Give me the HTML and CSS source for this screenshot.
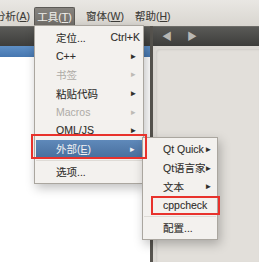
FILE: index.html
```html
<!DOCTYPE html>
<html lang="zh-CN">
<head>
  <meta charset="UTF-8" />
  <title>工具菜单</title>
  <link rel="stylesheet" href="styles.css">
</head>
<body>
  <div class="menubar">
    <span class="menubar-item clipped">分析(<u>A</u>)</span>
    <span class="menubar-item active">工具(<u>T</u>)</span>
    <span class="menubar-item">窗体(<u>W</u>)</span>
    <span class="menubar-item">帮助(<u>H</u>)</span>
  </div>

  <div class="workspace">
    <div class="left-pane">
      <div class="dark-bar"></div>
      <div class="selected-row"></div>
      <div class="white-area"></div>
    </div>
    <div class="divider"></div>
    <div class="right-pane">
      <div class="dark-bar nav-bar">
        <span class="nav-arrow">&#9664;</span>
        <span class="nav-arrow">&#9654;</span>
      </div>
      <div class="editor-area">
        <div class="editor-panel"></div>
      </div>
    </div>
  </div>

  <!-- 工具 dropdown -->
  <div class="menu tools-menu">
    <div class="menu-item"><span>定位...</span><span class="shortcut">Ctrl+K</span></div>
    <div class="menu-item"><span>C++</span><span class="arrow">&#9656;</span></div>
    <div class="menu-item disabled"><span>书签</span><span class="arrow">&#9656;</span></div>
    <div class="menu-item"><span>粘贴代码</span><span class="arrow">&#9656;</span></div>
    <div class="menu-item disabled"><span>Macros</span><span class="arrow">&#9656;</span></div>
    <div class="menu-item"><span>QML/JS</span><span class="arrow">&#9656;</span></div>
    <div class="menu-item highlight"><span>外部(<u>E</u>)</span><span class="arrow">&#9656;</span></div>
    <div class="separator"></div>
    <div class="menu-item"><span>选项...</span></div>
  </div>

  <!-- 外部 submenu -->
  <div class="menu external-menu">
    <div class="menu-item"><span>Qt Quick</span><span class="arrow">&#9656;</span></div>
    <div class="menu-item"><span>Qt语言家</span><span class="arrow">&#9656;</span></div>
    <div class="menu-item"><span>文本</span><span class="arrow">&#9656;</span></div>
    <div class="menu-item"><span>cppcheck</span></div>
    <div class="separator"></div>
    <div class="menu-item"><span>配置...</span></div>
  </div>

  <div class="mark mark-external"></div>
  <div class="mark mark-cppcheck"></div>
</body>
</html>
```

FILE: styles.css
```css
body {
  margin: 0;
  width: 259px;
  height: 262px;
  overflow: hidden;
  position: relative;
  background-color: #ffffff;
  font-family: "Liberation Sans", "Noto Sans CJK SC", sans-serif;
  font-size: 10.5px;
  color: #2f2e2b;
}
u {
  text-decoration: underline;
  text-underline-offset: 1px;
}

/* menu bar */
.menubar {
  height: 26px;
  display: flex;
  align-items: flex-end;
  background: linear-gradient(#e9e7e3, #d9d6d0);
}
.menubar-item {
  height: 19px;
  line-height: 18px;
  white-space: nowrap;
  color: #3c3b37;
  -webkit-text-stroke: 0.1px currentColor;
  box-sizing: border-box;
}
.menubar-item.clipped {
  margin-left: -5px;
  width: 39px;
}
.menubar-item.active {
  width: 41px;
  text-align: center;
  background: linear-gradient(#86837e, #716e69);
  border: 1px solid #5c5a56;
  border-bottom: none;
  border-radius: 2px 2px 0 0;
  color: #f0efec;
  margin-right: 11px;
}
.menubar-item + .menubar-item + .menubar-item {
  width: 49px;
}

/* workspace below the menu bar */
.workspace {
  display: flex;
  height: 236px;
}
.left-pane {
  width: 150px;
  display: flex;
  flex-direction: column;
}
.dark-bar {
  height: 19px;
  background: linear-gradient(#5a5a57, #3d3d3b);
  border-top: 1px solid #6d6c68;
}
.selected-row {
  height: 11px;
  background: linear-gradient(#5e8fc6, #4677b0);
}
.white-area {
  flex: 1;
  background-color: #ffffff;
}
.divider {
  width: 3px;
  background-color: #57544f;
}
.right-pane {
  flex: 1;
  display: flex;
  flex-direction: column;
}
.nav-bar {
  display: flex;
  align-items: center;
  gap: 15px;
  padding-left: 9px;
}
.nav-arrow {
  color: #b9b8b4;
  font-size: 10px;
  line-height: 1;
}
.editor-area {
  flex: 1;
  background-color: #dcd9d4;
  padding: 3px 0 0 3px;
}
.editor-panel {
  height: 100%;
  background-color: #e2dfda;
  border-radius: 4px 0 0 0;
  box-shadow: inset 1px 1px 2px rgba(0, 0, 0, 0.08);
}

/* popup menus */
.menu {
  position: absolute;
  background-color: #f3f1ee;
  border: 1px solid #aaa69f;
  box-sizing: border-box;
  box-shadow: 2px 4px 10px rgba(0, 0, 0, 0.25);
  padding: 2px 0;
}
.tools-menu {
  left: 34px;
  top: 25px;
  width: 110px;
  height: 159px;
}
.external-menu {
  left: 142px;
  top: 137px;
  width: 76px;
  height: 103px;
  z-index: 2;
}
.menu-item {
  height: 18.6px;
  display: flex;
  align-items: center;
  justify-content: space-between;
  padding: 0 7px 0 21px;
  white-space: nowrap;
  -webkit-text-stroke: 0.1px currentColor;
}
.external-menu .menu-item {
  padding: 0 6px 0 20px;
}
.menu-item.disabled {
  color: #aeaba6;
  -webkit-text-stroke: 0;
}
.menu-item.highlight {
  background: linear-gradient(#5f89ba, #486f9d);
  color: #f2f2f2;
  margin: 0 1px;
  padding-left: 20px;
  -webkit-text-stroke: 0;
}
.shortcut {
  margin-right: -4px;
}
.arrow {
  font-size: 9px;
  color: #2e2d2a;
}
.disabled .arrow {
  color: #bdbab5;
}
.highlight .arrow {
  color: #f2f2f2;
}
.separator {
  height: 1px;
  background-color: #dedbd6;
  margin: 2px 1px 1px;
}

/* red annotation boxes */
.mark {
  position: absolute;
  border: 2px solid #e8322c;
  box-sizing: border-box;
  z-index: 3;
}
.mark-external {
  left: 31px;
  top: 134px;
  width: 116px;
  height: 25px;
}
.mark-cppcheck {
  left: 151px;
  top: 196px;
  width: 69px;
  height: 19px;
}
```
